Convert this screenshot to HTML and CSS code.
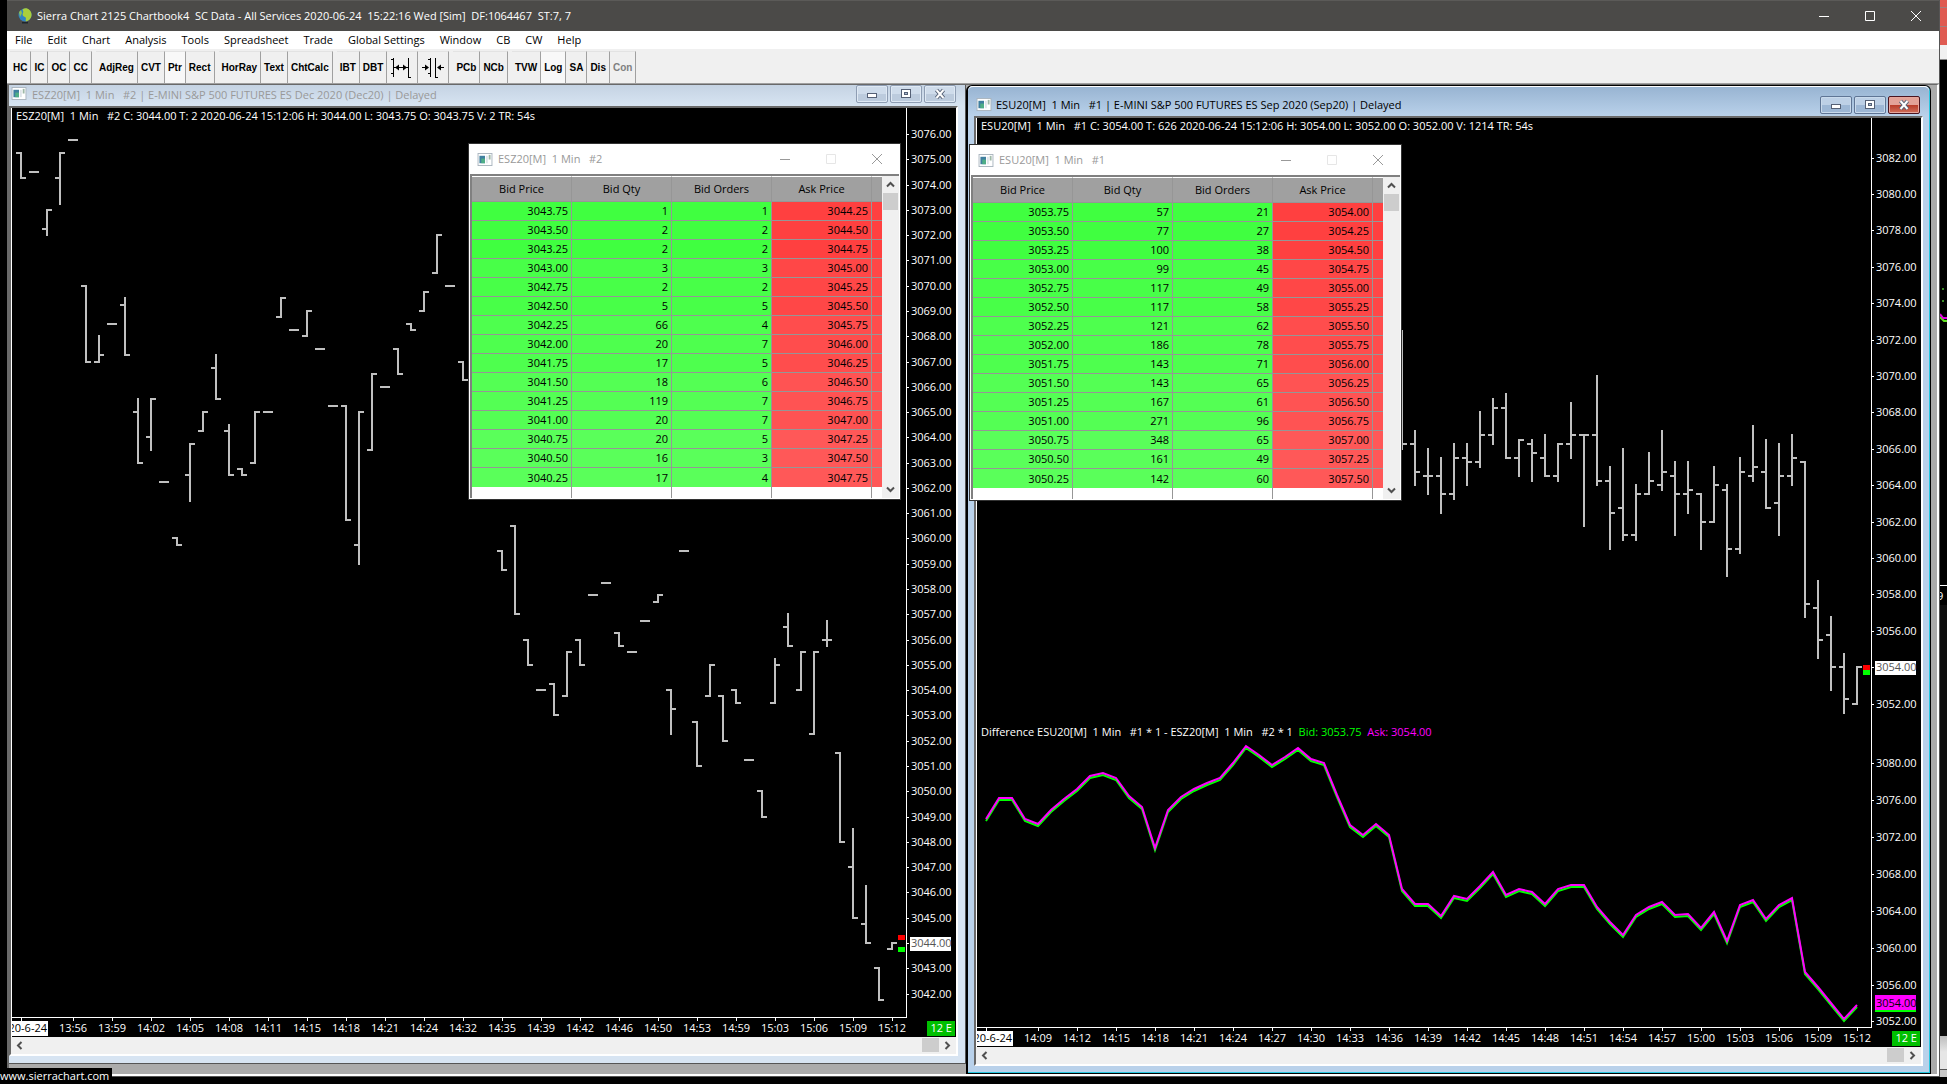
FILE: index.html
```html
<!DOCTYPE html>
<html lang="en">
<head>
<meta charset="utf-8">
<title>Sierra Chart 2125 Chartbook4</title>
<link rel="stylesheet" href="styles.css">
</head>
<body>
<svg class="symbols" aria-hidden="true">
  <symbol id="doc" viewBox="0 0 16 14">
    <rect x="0.5" y="0.5" width="15" height="13" fill="#fff" stroke="#a9b4be"/>
    <rect x="2" y="3" width="6" height="8" fill="#3f7f9f"/>
    <rect x="4" y="6" width="4" height="5" fill="#4fae86"/>
    <rect x="9" y="3" width="2" height="8" fill="#dfe5ea"/>
    <rect x="12" y="2" width="2" height="5" fill="#9fb9a8"/>
  </symbol>
  <symbol id="min" viewBox="0 0 12 12"><path d="M1 6h10" stroke="currentColor" fill="none" shape-rendering="crispEdges"/></symbol>
  <symbol id="max" viewBox="0 0 12 12"><path d="M1.500 1.500h9v9h-9z" stroke="currentColor" fill="none"/></symbol>
  <symbol id="close" viewBox="0 0 12 12"><path d="M1 1l10 10M11 1L1 11" stroke="currentColor" fill="none"/></symbol>
  <symbol id="mdi-min" viewBox="0 0 14 14"><rect x="2.500" y="6.500" width="9" height="4" fill="#fff" stroke="#556075"/></symbol>
  <symbol id="mdi-max" viewBox="0 0 14 14"><rect x="2.500" y="2.500" width="9" height="8" fill="#fff" stroke="#556075"/><rect x="5.500" y="5.500" width="3" height="2" fill="#a9b9d0" stroke="#556075"/></symbol>
  <symbol id="mdi-close" viewBox="0 0 14 14"><path d="M3.500 3l7 8M10.500 3l-7 8" stroke="#556075" stroke-width="4"/><path d="M3.500 3l7 8M10.500 3l-7 8" stroke="#fff" stroke-width="2"/></symbol>
  <symbol id="arrow" viewBox="0 0 17 17"><path d="M10.500 5L7 8.500l3.500 3.500" fill="none" stroke="#505050" stroke-width="2"/></symbol>
</svg>

<div class="backdrop" aria-hidden="true">
  <div class="backdrop-red"></div>
  <svg class="backdrop-chart" width="7" height="545">
    <path d="M2 229h2M2 241h2" stroke="#3c8c28" stroke-width="2"/>
    <path d="M0 257l4 4h3" stroke="#60e020" stroke-width="2" fill="none"/>
    <path d="M0 254l3 4h4" stroke="#e000e0" stroke-width="2" fill="none"/>
    <path d="M0 525.500h7" stroke="#fff"/>
    <text class="axis-text" x="-3" y="540">9</text>
  </svg>
  <div class="backdrop-dark"></div>
  <div class="backdrop-bar"></div>
</div>

<main class="app">
  <header class="titlebar">
    <svg class="globe" viewBox="0 0 16 16" aria-hidden="true">
      <circle cx="8" cy="7" r="6.500" fill="#2f83c4"/>
      <path d="M6 1c4-2 8 1 8.500 5S12 13 9 13.500C8 12 10 10 8 9S5 7 6 5 5 2 6 1z" fill="#a9cf3c"/>
      <path d="M2 4l2-2 1 3-2 4z" fill="#8cc152"/>
      <path d="M5 14h6v1.500H5z" fill="#20262c"/>
    </svg>
    <h1 class="app-title">Sierra Chart 2125 Chartbook4  SC Data - All Services 2020-06-24  15:22:16 Wed [Sim]  DF:1064467  ST:7, 7</h1>
    <div class="win-controls win-controls-main">
      <button aria-label="Minimize"><svg><use href="#min"/></svg></button>
      <button aria-label="Maximize"><svg><use href="#max"/></svg></button>
      <button aria-label="Close"><svg><use href="#close"/></svg></button>
    </div>
  </header>

  <nav class="menubar">
    <button>File</button><button>Edit</button><button>Chart</button><button>Analysis</button><button>Tools</button><button>Spreadsheet</button><button>Trade</button><button>Global Settings</button><button>Window</button><button>CB</button><button>CW</button><button>Help</button>
  </nav>

  <div class="toolbar">
    <div class="group"><button>HC</button><button>IC</button><button>OC</button><button>CC</button></div>
    <div class="group"><button>AdjReg</button><button>CVT</button><button class="pressed">Ptr</button><button>Rect</button></div>
    <div class="group"><button>HorRay</button><button>Text</button><button>ChtCalc</button></div>
    <div class="group"><button>IBT</button><button>DBT</button>
      <button aria-label="Expand spacing"><svg class="space-icon" viewBox="0 0 24 22"><path d="M1 2.500h3M1 16.500h3M3.500 1v19M18.500 1v19M18 20.500h3M4 10.500h14" stroke="#000" fill="none"/><path d="M5 10.500l4-3v6zM17 10.500l-4-3v6z"/></svg></button>
      <button aria-label="Reduce spacing"><svg class="space-icon" viewBox="0 0 24 22"><path d="M7 2.500h3M7 16.500h3M9.500 1v19M14.500 1v19M14 20.500h3M1 10.500h6M17 10.500h6" stroke="#000" fill="none"/><path d="M8 10.500l-4-3v6zM16 10.500l4-3v6z"/></svg></button></div>
    <div class="group"><button>PCb</button><button>NCb</button></div>
    <div class="group"><button>TVW</button><button class="pressed">Log</button><button>SA</button><button>Dis</button><button disabled>Con</button></div>
  </div>

  <div class="desktop">
    <section class="mdi mdi-left">
      <header class="mdi-title">
        <svg class="doc-icon" aria-hidden="true"><use href="#doc"/></svg>
        <h2>ESZ20[M]  1 Min   #2 | E-MINI S&amp;P 500 FUTURES ES Dec 2020 (Dec20) | Delayed</h2>
        <div class="mdi-controls">
          <button aria-label="Minimize"><svg><use href="#mdi-min"/></svg></button>
          <button aria-label="Restore"><svg><use href="#mdi-max"/></svg></button>
          <button aria-label="Close"><svg><use href="#mdi-close"/></svg></button>
        </div>
      </header>
      <div class="client">
        <div class="plot">
          <svg class="chart" id="chart-dec"></svg>
          <p class="info">ESZ20[M]  1 Min   #2 C: 3044.00 T: 2 2020-06-24 15:12:06 H: 3044.00 L: 3043.75 O: 3043.75 V: 2 TR: 54s</p>
        </div>
        <div class="hscroll">
          <button aria-label="Scroll left"><svg><use href="#arrow"/></svg></button>
          <span class="thumb"></span>
          <button class="flip" aria-label="Scroll right"><svg><use href="#arrow"/></svg></button>
        </div>
      </div>
    </section>

    <section class="mdi mdi-right">
      <header class="mdi-title">
        <svg class="doc-icon" aria-hidden="true"><use href="#doc"/></svg>
        <h2>ESU20[M]  1 Min   #1 | E-MINI S&amp;P 500 FUTURES ES Sep 2020 (Sep20) | Delayed</h2>
        <div class="mdi-controls">
          <button aria-label="Minimize"><svg><use href="#mdi-min"/></svg></button>
          <button aria-label="Restore"><svg><use href="#mdi-max"/></svg></button>
          <button class="close" aria-label="Close"><svg><use href="#mdi-close"/></svg></button>
        </div>
      </header>
      <div class="client">
        <div class="plot">
          <svg class="chart" id="chart-sep"></svg>
          <p class="info">ESU20[M]  1 Min   #1 C: 3054.00 T: 626 2020-06-24 15:12:06 H: 3054.00 L: 3052.00 O: 3052.00 V: 1214 TR: 54s</p>
          <p class="info info-study">Difference ESU20[M]  1 Min   #1 * 1 - ESZ20[M]  1 Min   #2 * 1  <span class="bid-text">Bid: 3053.75</span>  <span class="ask-text">Ask: 3054.00</span></p>
        </div>
        <div class="hscroll">
          <button aria-label="Scroll left"><svg><use href="#arrow"/></svg></button>
          <span class="thumb"></span>
          <button class="flip" aria-label="Scroll right"><svg><use href="#arrow"/></svg></button>
        </div>
      </div>
    </section>

    <section class="dom dom-dec">
      <header class="dom-title">
        <svg class="doc-icon" aria-hidden="true"><use href="#doc"/></svg>
        <h2>ESZ20[M]  1 Min   #2</h2>
        <div class="win-controls">
          <button aria-label="Minimize"><svg><use href="#min"/></svg></button>
          <button aria-label="Maximize" disabled><svg><use href="#max"/></svg></button>
          <button aria-label="Close"><svg><use href="#close"/></svg></button>
        </div>
      </header>
      <div class="dom-body">
        <table>
          <thead><tr><th>Bid Price</th><th>Bid Qty</th><th>Bid Orders</th><th>Ask Price</th><th class="cut"></th></tr></thead>
          <tbody>
            <tr><td>3043.75</td><td>1</td><td>1</td><td>3044.25</td><td></td></tr>
            <tr><td>3043.50</td><td>2</td><td>2</td><td>3044.50</td><td></td></tr>
            <tr><td>3043.25</td><td>2</td><td>2</td><td>3044.75</td><td></td></tr>
            <tr><td>3043.00</td><td>3</td><td>3</td><td>3045.00</td><td></td></tr>
            <tr><td>3042.75</td><td>2</td><td>2</td><td>3045.25</td><td></td></tr>
            <tr><td>3042.50</td><td>5</td><td>5</td><td>3045.50</td><td></td></tr>
            <tr><td>3042.25</td><td>66</td><td>4</td><td>3045.75</td><td></td></tr>
            <tr><td>3042.00</td><td>20</td><td>7</td><td>3046.00</td><td></td></tr>
            <tr><td>3041.75</td><td>17</td><td>5</td><td>3046.25</td><td></td></tr>
            <tr><td>3041.50</td><td>18</td><td>6</td><td>3046.50</td><td></td></tr>
            <tr><td>3041.25</td><td>119</td><td>7</td><td>3046.75</td><td></td></tr>
            <tr><td>3041.00</td><td>20</td><td>7</td><td>3047.00</td><td></td></tr>
            <tr><td>3040.75</td><td>20</td><td>5</td><td>3047.25</td><td></td></tr>
            <tr><td>3040.50</td><td>16</td><td>3</td><td>3047.50</td><td></td></tr>
            <tr><td>3040.25</td><td>17</td><td>4</td><td>3047.75</td><td></td></tr>
          </tbody>
          <tfoot><tr><td></td><td></td><td></td><td></td><td></td></tr></tfoot>
        </table>
        <div class="vscroll">
          <button class="up" aria-label="Scroll up"><svg><use href="#arrow"/></svg></button>
          <span class="thumb"></span>
          <button class="down" aria-label="Scroll down"><svg><use href="#arrow"/></svg></button>
        </div>
      </div>
    </section>

    <section class="dom dom-sep">
      <header class="dom-title">
        <svg class="doc-icon" aria-hidden="true"><use href="#doc"/></svg>
        <h2>ESU20[M]  1 Min   #1</h2>
        <div class="win-controls">
          <button aria-label="Minimize"><svg><use href="#min"/></svg></button>
          <button aria-label="Maximize" disabled><svg><use href="#max"/></svg></button>
          <button aria-label="Close"><svg><use href="#close"/></svg></button>
        </div>
      </header>
      <div class="dom-body">
        <table>
          <thead><tr><th>Bid Price</th><th>Bid Qty</th><th>Bid Orders</th><th>Ask Price</th><th class="cut"></th></tr></thead>
          <tbody>
            <tr><td>3053.75</td><td>57</td><td>21</td><td>3054.00</td><td></td></tr>
            <tr><td>3053.50</td><td>77</td><td>27</td><td>3054.25</td><td></td></tr>
            <tr><td>3053.25</td><td>100</td><td>38</td><td>3054.50</td><td></td></tr>
            <tr><td>3053.00</td><td>99</td><td>45</td><td>3054.75</td><td></td></tr>
            <tr><td>3052.75</td><td>117</td><td>49</td><td>3055.00</td><td></td></tr>
            <tr><td>3052.50</td><td>117</td><td>58</td><td>3055.25</td><td></td></tr>
            <tr><td>3052.25</td><td>121</td><td>62</td><td>3055.50</td><td></td></tr>
            <tr><td>3052.00</td><td>186</td><td>78</td><td>3055.75</td><td></td></tr>
            <tr><td>3051.75</td><td>143</td><td>71</td><td>3056.00</td><td></td></tr>
            <tr><td>3051.50</td><td>143</td><td>65</td><td>3056.25</td><td></td></tr>
            <tr><td>3051.25</td><td>167</td><td>61</td><td>3056.50</td><td></td></tr>
            <tr><td>3051.00</td><td>271</td><td>96</td><td>3056.75</td><td></td></tr>
            <tr><td>3050.75</td><td>348</td><td>65</td><td>3057.00</td><td></td></tr>
            <tr><td>3050.50</td><td>161</td><td>49</td><td>3057.25</td><td></td></tr>
            <tr><td>3050.25</td><td>142</td><td>60</td><td>3057.50</td><td></td></tr>
          </tbody>
          <tfoot><tr><td></td><td></td><td></td><td></td><td></td></tr></tfoot>
        </table>
        <div class="vscroll">
          <button class="up" aria-label="Scroll up"><svg><use href="#arrow"/></svg></button>
          <span class="thumb"></span>
          <button class="down" aria-label="Scroll down"><svg><use href="#arrow"/></svg></button>
        </div>
      </div>
    </section>
  </div>
</main>
<footer class="status">www.sierrachart.com</footer>
<script src="chart.js"></script>
</body>
</html>
```

FILE: styles.css
```css
* { box-sizing: border-box; }

html, body { height: 100%; }

body {
  margin: 0;
  overflow: hidden;
  background: #000;
  color: #000;
  font: 11px/16px "Open Sans", "Noto Sans", sans-serif;
}

h1, h2, p { margin: 0; font-size: 11px; font-weight: 400; line-height: 16px; white-space: pre; }

button {
  margin: 0;
  padding: 0;
  border: 0;
  background: none;
  color: inherit;
  font: inherit;
}

svg { display: block; }

.symbols { position: absolute; width: 0; height: 0; }

/* Other application showing past the right edge */
.backdrop {
  position: absolute;
  top: 0;
  right: 0;
  bottom: 7px;
  width: 7px;
  display: flex;
  flex-direction: column;
}
.backdrop-red {
  height: 60px;
  border-bottom: 1px solid #888;
  background: linear-gradient(#df5b52 0 7px, #a08080 7px 8px, #df5b52 8px 26px, #a08080 26px 27px, #df5b52 27px 45px, #f0f0f0 45px);
}
.backdrop-dark { flex: 1; background: #0d0d0d; }
.backdrop-bar { height: 41px; background: linear-gradient(#bdbdbd, #e6e6e6 16px 33px, #555 33px 34px, #c8c8c8 34px); }

.app {
  position: relative;
  display: flex;
  flex-direction: column;
  height: calc(100vh - 7px);
  margin: 0 7px;
  border-right: 1px solid #555;
  border-bottom: 1px solid #555;
  background: #f0f0f0;
}

.titlebar {
  display: flex;
  align-items: center;
  height: 31px;
  padding-left: 10px;
  border-top: 1px solid #5b5a58;
  background: #4b4a48;
  color: #fff;
}
.globe { width: 16px; height: 16px; margin-right: 4px; }
.app-title { flex: 1; }

.win-controls { display: flex; margin-left: auto; color: #999; }
.win-controls button { display: grid; place-items: center; width: 46px; height: 28px; }
.win-controls svg { width: 12px; height: 12px; }
.win-controls button:disabled { color: #e6e6e6; }
.win-controls-main { color: #fff; }

.menubar {
  display: flex;
  gap: 15px;
  height: 18px;
  padding-left: 8px;
  background: #fff;
}

.toolbar {
  display: flex;
  gap: 4px;
  height: 35px;
  padding: 2px 0 0 3px;
  border-bottom: 1px solid #a0a0a0;
}
.group { display: flex; }
.toolbar button {
  display: grid;
  place-items: center;
  padding: 0 3px;
  border-right: 1px solid #a0a0a0;
  border-top: 1px solid #e3e3e3;
  font: bold 10px/16px "Liberation Sans", Arial, sans-serif;
}
.toolbar button.pressed { background: #f8f8f8; }
.toolbar button:disabled { color: #808080; }
.space-icon { width: 24px; height: 22px; }

.desktop {
  position: relative;
  flex: 1;
  border: solid;
  border-width: 1px 2px 2px;
  border-color: #696969 #fff #fff #696969;
  background: #ababab;
}

/* Chart windows */
.mdi { position: absolute; display: flex; flex-direction: column; }
.mdi-left {
  top: 0;
  left: 0;
  bottom: 10px;
  width: calc(50% - 7px);
  padding: 0 7px 7px 0;
  border: solid #555;
  border-width: 0 1px 1px 0;
  background: #d7e4f2;
}
.mdi-right {
  top: 0;
  right: 6px;
  bottom: 0;
  left: calc(50% - 7px);
  padding: 0 7px 7px 6px;
  border: solid #000;
  border-width: 1px 1px 1px 2px;
  border-radius: 6px 6px 0 0;
  background: #b9d1ea;
  box-shadow: inset -1px -1px #27c7e0;
}
.mdi-title { display: flex; flex: none; }
.mdi-title h2 { flex: 1; }
.doc-icon { width: 16px; height: 13px; }
.mdi-left .mdi-title { height: 21px; margin-right: -7px; padding: 0 9px 0 2px; background: linear-gradient(#c5d3e3, #d7e4f2); color: #999; }
.mdi-left .doc-icon { margin: 2px 5px 0 0; }
.mdi-left h2 { margin-top: 2px; }
.mdi-right .mdi-title {
  height: 30px;
  margin: 0 -6px;
  padding: 9px 9px 0 8px;
  border-top: 1px solid #fff;
  border-radius: 5px 5px 0 0;
  background: linear-gradient(#98b4d2, #b9d1ea);
}
.mdi-right .doc-icon { margin: 2px 4px 0 0; }
.mdi-right h2 { margin-top: 1px; }
.mdi-controls { display: flex; gap: 2px; }
.mdi-controls button {
  display: grid;
  place-items: center;
  width: 32px;
  height: 18px;
  border: 1px solid #8e9db3;
  border-radius: 2px;
  background: linear-gradient(#cfdceb 50%, #bccbdd 50%);
  box-shadow: inset 0 0 0 1px #dfe9f4;
}
.mdi-right .mdi-controls button { border-color: #5f7595; background: linear-gradient(#bdd0e6 50%, #9db7d5 50%); box-shadow: inset 0 0 0 1px #c9daec; }
.mdi-right .mdi-controls .close { border-color: #4a1420; background: linear-gradient(#e3a298 50%, #b83a28 50%, #d0705c); box-shadow: inset 0 0 0 1px #e6a69c; }
.mdi-controls svg { width: 14px; height: 14px; }

.client {
  flex: 1;
  display: flex;
  flex-direction: column;
  min-height: 0;
  border: 2px solid #696969;
  border-right-color: #fff;
  border-bottom-color: #fff;
}
.plot { position: relative; flex: 1; min-height: 0; border-left: 1px solid #fff; background: #000; }
.chart { width: 100%; height: 100%; }
.info { position: absolute; top: 0; left: 4px; color: #fff; }
.info-study { top: 65.200%; }
.bid-text { color: #0f0; }
.ask-text { color: #f0f; }

.axis-text { fill: #fff; font: 11px "Open Sans", "Noto Sans", sans-serif; }
.axis-text.gray { fill: #555; }
.axis-text.dark { fill: #000; }
.middle { text-anchor: middle; }
.end { text-anchor: end; }

.hscroll { display: flex; flex: none; height: 17px; background: #f0f0f0; }
.hscroll svg, .vscroll svg { width: 17px; height: 17px; }
.thumb { background: #cdcdcd; }
.hscroll .thumb { width: 17px; margin: 1px 0 2px auto; }
.flip svg { transform: rotate(180deg); }

/* Market depth windows */
.dom {
  position: absolute;
  width: 433px;
  border: 1px solid #333;
  background: #fff;
}
.dom-dec { top: 58px; left: calc(50% - 505px); }
.dom-sep { top: 59px; left: calc(50% - 4px); }
.dom-title { display: flex; align-items: center; height: 30px; padding-left: 8px; color: #999; }
.dom-title .doc-icon { margin-right: 5px; }
.dom-body {
  display: flex;
  justify-content: space-between;
  margin: 0 1px 1px;
  border-top: 2px solid #808080;
  border-left: 2px solid #808080;
}
table { width: 410px; border-collapse: separate; border-spacing: 0; table-layout: fixed; }
th, td { height: 19px; padding: 0 3px; border-right: 1px solid #969696; line-height: 16px; text-align: right; white-space: nowrap; }
th {
  width: 100px;
  height: 26px;
  border-top: 1px solid #fff;
  border-bottom: 1px solid #969696;
  background: #a0a0a0;
  font-weight: 400;
  text-align: center;
}
.cut { width: 10px; }
th:last-child, td:last-child { border-right: 0; }
tbody { --bid: #40ff40; --ask: #ff4040; }
tbody tr:nth-child(n+4) { --bid: #48ff48; --ask: #ff4747; }
tbody tr:nth-child(n+7) { --bid: #4eff4e; --ask: #ff4d4d; }
tbody tr:nth-child(n+10) { --bid: #54ff54; --ask: #ff5353; }
tbody tr:nth-child(n+13) { --bid: #5aff5a; --ask: #ff5858; }
tbody td { border-bottom: 1px solid #969696; background: var(--bid); }
tbody td:nth-child(n+4) { background: var(--ask); }
tbody tr:last-child td { border-bottom: 0; }
tfoot td { height: 11px; }
.vscroll { display: flex; flex-direction: column; width: 17px; background: #f0f0f0; }
.vscroll .thumb { height: 17px; margin: 0 1px; }
.up svg { transform: rotate(90deg); }
.down { margin-top: auto; }
.down svg { transform: rotate(-90deg); }

.status { position: absolute; left: 0; bottom: 0; padding-right: 3px; background: #000; color: #fff; }
```

FILE: chart.js
```js
const NS = "http://www.w3.org/2000/svg";
const AXIS_W = 50, AXIS_H = 20, BAR = 13, LAST = 64;

// Bars are [slot, open, high, low, close], in quarter-point ticks below `base`.
// The last slot is the bar at the right edge.
const dec = {
  id: "chart-dec", base: 3076, top: 26, point: 25.28, step: 1, from: 3076, to: 3042, last: 3044, bid: 129, ask: 127,
  times: "13:56 13:59 14:02 14:05 14:08 14:11 14:15 14:18 14:21 14:24 14:32 14:35 14:39 14:42 14:46 14:50 14:53 14:59 15:03 15:06 15:09 15:12",
  bars: [
    [0,3,3,7,7],[1,6,6,6,6],[2,15,12,16,12],[3,7,3,11,3],[4,1,1,1,1],[5,24,24,36,36],[6,36,32,36,35],[7,30,30,30,30],
    [8,27,26,35,35],[9,44,42,52,52],[10,48,42,50,42],[11,55,55,55,55],[12,64,64,65,65],[13,54,49,58,49],[14,47,44,47,44],
    [15,37,35,42,42],[16,47,46,54,54],[17,53,53,54,54],[18,52,44,52,44],[19,44,44,44,44],[20,29,26,29,26],[21,31,31,31,31],
    [22,32,28,32,28],[23,34,34,34,34],[24,43,43,43,43],[25,43,43,61,61],[26,65,44,68,44],[27,50,38,50,38],[28,40,40,40,40],
    [29,34,34,38,38],[30,30,30,31,31],[31,28,25,28,25],[32,22,16,22,16],[33,24,24,24,24],[34,36,36,39,39],
    [37,66,66,69,69],[38,62,62,76,76],[39,80,80,84,84],[40,88,88,88,88],[41,87,87,92,92],[42,89,82,89,82],[43,80,80,84,84],
    [44,73,73,73,73],[45,71,71,71,71],[46,79,79,81,81],[47,82,82,82,82],[48,77,77,77,77],[49,74,73,74,73],[50,88,88,95,91],
    [51,66,66,66,66],[52,93,93,100,100],[53,89,84,89,84],[54,89,89,96,96],[55,88,88,90,90],[56,99,99,99,99],[57,104,104,108,108],
    [58,90,83,90,84],[59,78,76,81,81],[60,88,82,88,82],[61,95,82,95,82],[62,80,77,81,80],[63,98,98,112,112],
    [64,116,110,124,124],[65,125,119,128,128],[66,132,132,137,137],[67,129,128,129,128]
  ]
};

const sep = {
  id: "chart-sep", base: 3070, top: 258, point: 18.2, step: 2, from: 3082, to: 3052, last: 3054, bid: 65, ask: 64,
  times: "14:09 14:12 14:15 14:18 14:21 14:24 14:27 14:30 14:33 14:36 14:39 14:42 14:45 14:48 14:51 14:54 14:57 15:00 15:03 15:06 15:09 15:12",
  bars: [
    [32,16,-10,16,15],[33,15,12,24,21],[34,22,16,26,22],[35,22,18,30,26],[36,26,15,27,18],[37,18,15,24,19],[38,19,8,20,13],
    [39,13,5,15,7],[40,7,4,18,18],[41,18,14,22,14],[42,15,14,23,17],[43,18,13,22,22],[44,22,15,23,15],[45,15,6,18,13],
    [46,13,13,33,13],[47,13,0,24,23],[48,23,20,38,30],[49,29,16,36,35],[50,35,24,36,26],[51,26,17,26,23],[52,24,12,25,21],
    [53,22,19,35,26],[54,26,19,30,25],[55,26,26,38,32],[56,32,20,32,24],[57,25,24,44,38],[58,38,18,39,21],[59,22,11,23,20],
    [60,21,14,29,29],[61,28,15,35,22],[62,22,13,24,18],[63,19,19,53,50],[64,51,45,62,58],[65,57,53,69,64],[66,64,61,74,71],[67,72,64,72,64]
  ]
};

// Difference study, as heights below the study's top, one value for each slot.
const study = {
  from: 3080, to: 3052, step: 4, top: 645, point: 9.23, last: 3054,
  values: [109,88,88,109,114,100,89,79,66,63,68,86,97,138,100,87,79,73,68,53,36,45,55,47,38,49,53,85,115,125,114,125,179,194,194,206,
    186,189,176,162,185,179,182,194,179,175,175,197,212,225,205,197,192,205,204,218,202,231,195,190,209,195,188,262,277,293,309,295]
};

function add(svg, name, attrs, text) {
  const node = document.createElementNS(NS, name);
  for (const key in attrs) node.setAttribute(key, attrs[key]);
  if (text !== undefined) node.textContent = text;
  svg.append(node);
}

function label(svg, x, y, text, cls) {
  add(svg, "text", { x, y: y + 4, class: "axis-text " + (cls || "") }, text);
}

function priceAxis(svg, axisX, range, y) {
  for (let p = range.from; p >= range.to; p -= range.step) {
    add(svg, "rect", { x: axisX + 1, y: y(p), width: 2, height: 1, fill: "#fff" });
    const marked = p === range.last;
    if (marked) add(svg, "rect", { x: axisX + 4, y: y(p) - 6, width: 41, height: 14, fill: "#fff" });
    label(svg, axisX + 5, y(p), p.toFixed(2), marked ? "gray" : "");
  }
}

function draw(chart) {
  const svg = document.getElementById(chart.id);
  const w = svg.clientWidth, h = svg.clientHeight, k = h / 929;
  const axisX = w - AXIS_W, axisY = h - AXIS_H;
  const slotX = i => w - LAST - (67 - i) * BAR;
  const tickY = q => Math.round((chart.top + q * chart.point / 4) * k);
  svg.replaceChildren();

  let d = "";
  for (const [i, o, hi, lo, c] of chart.bars) {
    const x = slotX(i);
    d += `M${x - 5} ${tickY(o)}h6M${x - 1} ${tickY(c)}h6`;
    if (hi !== lo) d += `M${x} ${tickY(hi) - 1}V${tickY(lo) + 1}`;
  }
  add(svg, "path", { d, stroke: "#c0c0c0", "stroke-width": 2, fill: "none", "shape-rendering": "crispEdges" });

  add(svg, "rect", { x: axisX - 8, y: tickY(chart.ask) - 2, width: 7, height: 5, fill: "#f00" });
  add(svg, "rect", { x: axisX - 8, y: tickY(chart.bid) - 2, width: 7, height: 5, fill: "#0f0" });

  add(svg, "rect", { x: 0, y: axisY, width: axisX + 1, height: 1, fill: "#fff" });
  add(svg, "rect", { x: axisX, y: 0, width: 1, height: axisY, fill: "#fff" });
  priceAxis(svg, axisX, chart, p => tickY((chart.base - p) * 4));

  const times = chart.times.split(" ");
  times.forEach((time, n) => {
    const x = slotX(67 - (times.length - 1 - n) * 3);
    add(svg, "rect", { x, y: axisY + 1, width: 1, height: 3, fill: "#fff" });
    label(svg, x, h - 9, time, "middle");
  });
  add(svg, "rect", { x: slotX(0), y: axisY + 1, width: 1, height: 3, fill: "#fff" });
  add(svg, "rect", { x: 0, y: h - 16, width: 36, height: 15, fill: "#fff" });
  label(svg, 35, h - 9, "2020-6-24", "dark end");
  add(svg, "rect", { x: w - 29, y: h - 16, width: 28, height: 15, fill: "#00c000" });
  label(svg, w - 4, h - 9, "12 E", "end");

  if (chart !== sep) return;
  const studyY = p => Math.round((study.top + (study.from - p) * study.point) * k);
  const line = shift => study.values.map((v, i) => `${slotX(i)},${(592 + v) * k + shift}`).join(" ");
  add(svg, "polyline", { points: line(2), stroke: "#0f0", "stroke-width": 2, fill: "none" });
  add(svg, "polyline", { points: line(0), stroke: "#f0f", "stroke-width": 2, fill: "none" });
  priceAxis(svg, axisX, { ...study, last: 0 }, studyY);
  const y = studyY(study.last);
  add(svg, "rect", { x: axisX + 4, y: y - 8, width: 41, height: 15, fill: "#f0f" });
  add(svg, "rect", { x: axisX + 4, y: y + 7, width: 41, height: 2, fill: "#0f0" });
  label(svg, axisX + 5, y, "3054.00", "dark");
}

function drawAll() {
  draw(dec);
  draw(sep);
}

addEventListener("resize", drawAll);
drawAll();
```
